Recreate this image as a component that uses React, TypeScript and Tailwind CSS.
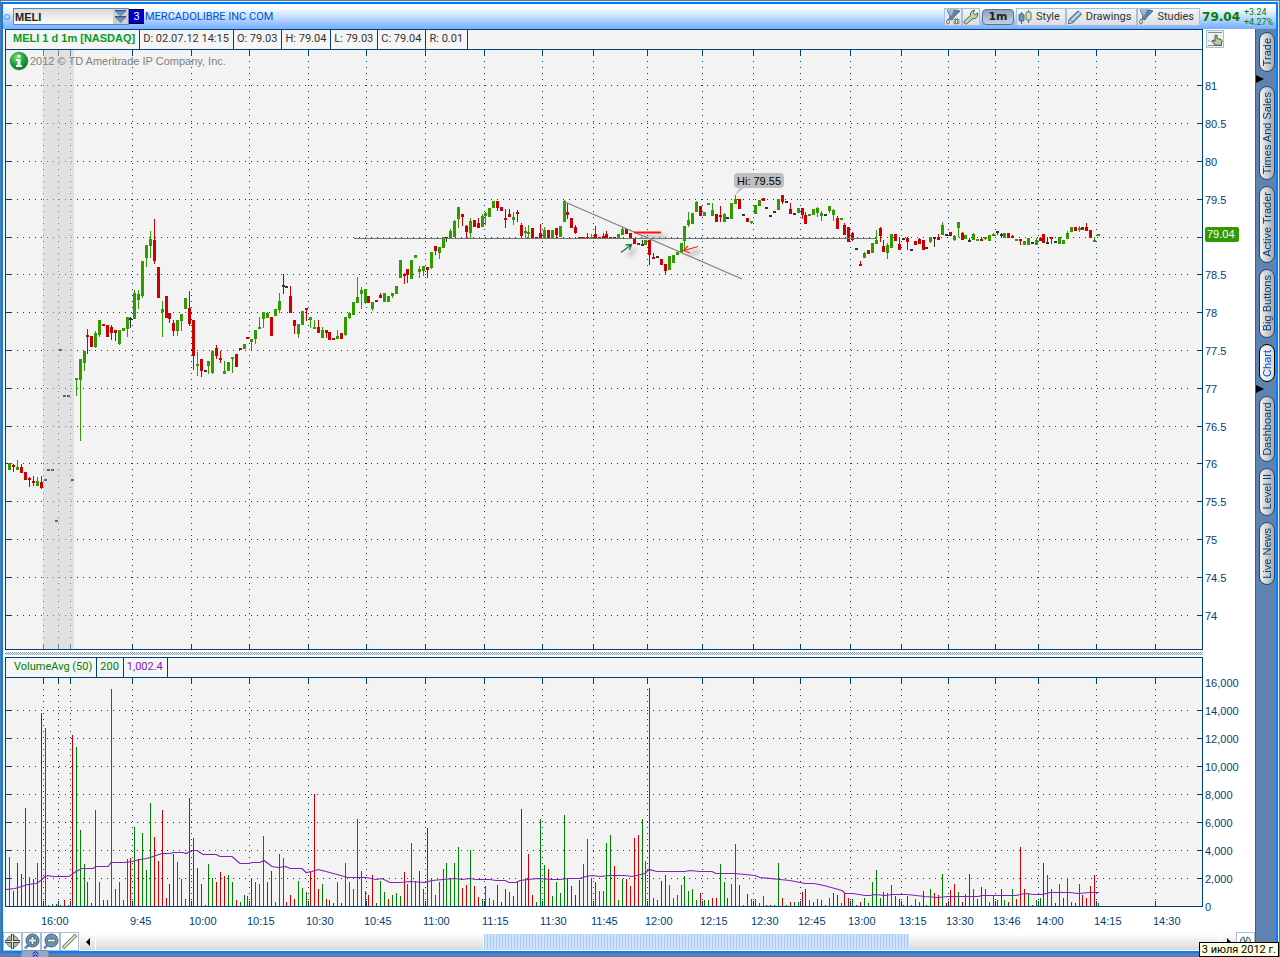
import type { ReactNode } from 'react';

type Tone = 'g' | 'r' | 'k' | 'd';
// x, body top, body bottom, tone, wick top, wick bottom
type Candle = [number, number, number, Tone, number?, number?];
// x, top, tone
type VolumeBar = [number, number, Tone];

const PLOT_LEFT = 5;
const PLOT_RIGHT = 1202;
const VOLUME_BASE = 906;

const candleColors: Record<Tone, string> = {
  g: '#339900',
  r: '#cc0000',
  k: '#333333',
  d: '#666666',
};

const volumeColors: Record<Tone, string> = {
  g: '#008000',
  r: '#cc0000',
  k: '#333333',
  d: '#666666',
};

const timeTicks = [
  { x: 43, label: '16:00' },
  { x: 58, label: '' },
  { x: 70, label: '' },
  { x: 132, label: '9:45' },
  { x: 191, label: '10:00' },
  { x: 249, label: '10:15' },
  { x: 308, label: '10:30' },
  { x: 366, label: '10:45' },
  { x: 425, label: '11:00' },
  { x: 484, label: '11:15' },
  { x: 542, label: '11:30' },
  { x: 593, label: '11:45' },
  { x: 647, label: '12:00' },
  { x: 702, label: '12:15' },
  { x: 753, label: '12:30' },
  { x: 800, label: '12:45' },
  { x: 850, label: '13:00' },
  { x: 901, label: '13:15' },
  { x: 948, label: '13:30' },
  { x: 995, label: '13:46' },
  { x: 1038, label: '14:00' },
  { x: 1096, label: '14:15' },
  { x: 1155, label: '14:30' },
];

const priceTicks = [
  { y: 85, label: '81' },
  { y: 123, label: '80.5' },
  { y: 161, label: '80' },
  { y: 199, label: '79.5' },
  { y: 237, label: '' },
  { y: 274, label: '78.5' },
  { y: 312, label: '78' },
  { y: 350, label: '77.5' },
  { y: 388, label: '77' },
  { y: 426, label: '76.5' },
  { y: 463, label: '76' },
  { y: 501, label: '75.5' },
  { y: 539, label: '75' },
  { y: 577, label: '74.5' },
  { y: 615, label: '74' },
];

const volumeTicks = [
  { y: 710, label: '14,000' },
  { y: 738, label: '12,000' },
  { y: 766, label: '10,000' },
  { y: 794, label: '8,000' },
  { y: 822, label: '6,000' },
  { y: 850, label: '4,000' },
  { y: 878, label: '2,000' },
];

const candles: Candle[] = [
  [9, 463, 470, 'g'], [13, 465, 467, 'r', 464, 472], [17, 467, 470, 'g', 460, 470], [21, 467, 473, 'r', 464, 473],
  [25, 472, 480, 'r'], [29, 478, 480, 'r', 477, 487], [33, 481, 483, 'r', 476, 486], [37, 481, 486, 'g', 477, 486],
  [41, 482, 488, 'r', 476, 489], [45, 479, 481, 'd'], [48, 469, 471, 'd'], [52, 469, 471, 'd'], [56, 520, 522, 'd'],
  [60, 349, 351, 'd'], [64, 395, 397, 'd'], [68, 395, 397, 'd'], [72, 479, 481, 'd'],
  [76, 378, 380, 'g', 378, 396], [80, 359, 380, 'g', 359, 441], [84, 351, 363, 'g', 351, 371], [87, 335, 337, 'r', 329, 354],
  [91, 336, 347, 'r'], [95, 333, 347, 'g', 331, 348], [99, 320, 335, 'g', 320, 337], [103, 324, 326, 'r'],
  [107, 325, 337, 'r'], [111, 327, 333, 'r', 325, 340], [115, 330, 333, 'r', 330, 341], [119, 330, 344, 'g', 330, 345],
  [123, 328, 331, 'g'], [127, 317, 329, 'g', 317, 337], [130, 318, 320, 'k', 317, 328], [134, 293, 319, 'g', 290, 319],
  [138, 294, 300, 'g', 290, 309], [142, 261, 296, 'g', 261, 298], [146, 245, 258, 'g', 245, 267], [150, 239, 246, 'g', 231, 258],
  [154, 240, 261, 'r', 219, 264], [158, 267, 298, 'r'], [162, 309, 312, 'g', 301, 337], [166, 296, 318, 'r'],
  [169, 313, 319, 'r', 313, 323], [173, 323, 331, 'r', 320, 336], [177, 320, 331, 'g', 320, 336], [181, 314, 321, 'g', 314, 331],
  [185, 298, 309, 'g'], [189, 308, 324, 'r', 291, 326], [193, 320, 356, 'r', 320, 370], [197, 364, 366, 'g', 352, 376],
  [201, 359, 371, 'r', 359, 377], [205, 370, 372, 'k'], [208, 361, 366, 'g', 361, 374], [212, 351, 373, 'g', 350, 374],
  [216, 348, 356, 'r', 345, 359], [220, 358, 360, 'r', 351, 363], [224, 371, 374, 'g', 361, 374], [228, 362, 371, 'g'],
  [232, 357, 359, 'g', 357, 373], [236, 354, 367, 'r'], [240, 348, 350, 'r'], [244, 344, 349, 'g'], [247, 337, 339, 'r'],
  [251, 339, 342, 'g', 339, 350], [255, 330, 339, 'g', 330, 344], [259, 327, 329, 'g', 317, 329], [263, 312, 319, 'g', 312, 328],
  [267, 313, 318, 'g', 312, 318], [271, 317, 336, 'r'], [275, 309, 316, 'g'], [279, 301, 310, 'g', 293, 313],
  [283, 285, 287, 'k', 274, 294], [286, 286, 288, 'k'], [290, 296, 313, 'r', 286, 313], [294, 320, 326, 'r', 320, 334],
  [298, 324, 334, 'g', 324, 338], [302, 311, 325, 'g'], [306, 308, 310, 'r', 308, 321], [310, 317, 320, 'g', 317, 328],
  [314, 327, 329, 'g', 320, 329], [318, 327, 333, 'r', 320, 333], [322, 330, 338, 'g', 327, 338], [326, 330, 333, 'r', 330, 338],
  [329, 332, 340, 'r'], [333, 338, 340, 'r'], [337, 336, 339, 'g', 330, 339], [341, 333, 339, 'r'],
  [345, 317, 335, 'g', 317, 336], [349, 313, 318, 'g', 312, 319], [353, 302, 315, 'g'], [357, 297, 303, 'g', 277, 303],
  [361, 290, 294, 'g', 287, 309], [365, 289, 303, 'g', 289, 304], [368, 296, 303, 'r'], [372, 302, 309, 'g', 302, 311],
  [376, 300, 302, 'r'], [380, 295, 298, 'r', 293, 298], [384, 293, 302, 'g'], [388, 296, 302, 'g'],
  [392, 293, 296, 'g', 293, 298], [396, 286, 294, 'g'], [400, 260, 278, 'g'], [404, 274, 276, 'r', 273, 284],
  [407, 269, 275, 'r', 269, 283], [411, 260, 279, 'g'], [415, 255, 258, 'g'], [419, 269, 272, 'g', 266, 278],
  [423, 266, 271, 'g', 266, 276], [427, 267, 270, 'r', 267, 278], [431, 252, 268, 'g', 252, 269], [435, 246, 251, 'r', 246, 255],
  [439, 247, 253, 'g', 247, 259], [443, 237, 248, 'g'], [446, 237, 239, 'k', 237, 242], [450, 231, 239, 'g', 229, 239],
  [454, 221, 237, 'g', 220, 237], [458, 207, 219, 'g', 207, 228], [462, 214, 217, 'r', 214, 226], [466, 226, 232, 'r', 225, 238],
  [470, 221, 233, 'g', 218, 238], [474, 220, 227, 'r'], [478, 223, 228, 'r', 218, 228], [482, 216, 227, 'g', 214, 227],
  [485, 213, 216, 'g', 212, 225], [489, 208, 217, 'g'], [493, 201, 208, 'g'], [497, 201, 208, 'r', 201, 211],
  [501, 207, 211, 'r'], [505, 218, 220, 'r', 209, 228], [509, 214, 217, 'r', 209, 217], [513, 217, 220, 'g', 212, 225],
  [517, 212, 214, 'r', 210, 222], [521, 225, 236, 'r', 223, 238], [525, 231, 233, 'g', 227, 238], [528, 232, 234, 'g', 225, 238],
  [532, 228, 238, 'r'], [536, 237, 239, 'k'], [540, 233, 238, 'r', 224, 238], [544, 230, 238, 'g', 227, 238],
  [548, 230, 238, 'r'], [552, 230, 238, 'g'], [556, 228, 235, 'r', 228, 238], [560, 226, 237, 'g'],
  [564, 201, 222, 'g', 200, 222], [567, 212, 215, 'r', 203, 219], [571, 218, 228, 'r'], [575, 227, 233, 'r', 225, 234],
  [579, 237, 239, 'r'], [583, 237, 239, 'r'], [587, 237, 239, 'r', 233, 239], [591, 237, 239, 'g', 234, 239],
  [595, 234, 238, 'r', 226, 238], [599, 237, 239, 'r'], [603, 236, 239, 'r', 233, 239], [606, 234, 238, 'r', 231, 238],
  [610, 237, 239, 'r'], [614, 237, 239, 'k'], [618, 234, 238, 'g'], [622, 229, 235, 'g', 227, 235],
  [626, 229, 234, 'r'], [630, 233, 238, 'r'], [634, 238, 244, 'r'], [638, 243, 245, 'r'],
  [642, 244, 246, 'k', 240, 246], [645, 240, 245, 'g'], [649, 240, 255, 'r', 240, 265], [653, 257, 259, 'r', 253, 259],
  [657, 256, 258, 'k'], [661, 259, 265, 'r'], [665, 264, 271, 'r', 264, 275], [669, 256, 270, 'g'],
  [673, 255, 263, 'g'], [677, 252, 255, 'g'], [681, 243, 253, 'g'], [684, 226, 241, 'g', 226, 250],
  [688, 220, 225, 'g', 212, 227], [692, 213, 224, 'g'], [696, 202, 212, 'g', 201, 212], [700, 206, 216, 'r'],
  [704, 212, 216, 'g'], [708, 203, 205, 'g'], [712, 210, 216, 'g', 203, 216], [716, 214, 222, 'r'],
  [720, 215, 217, 'r', 206, 222], [724, 214, 222, 'g', 213, 222], [727, 217, 219, 'k'], [731, 203, 219, 'g'],
  [735, 199, 204, 'g', 195, 204], [739, 199, 209, 'r'], [743, 214, 216, 'k'], [747, 218, 222, 'r'],
  [751, 221, 223, 'g', 221, 224], [755, 205, 214, 'g'], [759, 200, 206, 'g'], [763, 198, 201, 'r'],
  [766, 207, 209, 'k'], [770, 215, 217, 'k'], [774, 211, 213, 'k'], [778, 199, 210, 'g'],
  [782, 195, 202, 'r', 195, 204], [786, 201, 203, 'k'], [790, 209, 214, 'r', 203, 214], [794, 213, 215, 'k'],
  [798, 208, 213, 'g'], [802, 208, 215, 'r', 208, 219], [805, 215, 224, 'r', 212, 224], [809, 214, 216, 'g'],
  [813, 209, 215, 'g'], [817, 208, 213, 'g', 207, 217], [821, 213, 216, 'g', 211, 221], [825, 214, 216, 'k'],
  [829, 206, 211, 'g', 206, 213], [833, 210, 215, 'g', 209, 221], [837, 218, 229, 'r', 216, 229], [841, 218, 220, 'g'],
  [844, 225, 235, 'r', 223, 235], [848, 227, 242, 'r'], [852, 233, 240, 'r', 232, 241], [856, 248, 250, 'k'],
  [860, 264, 266, 'r', 261, 266], [864, 253, 258, 'g', 252, 258], [868, 250, 254, 'r'], [872, 243, 253, 'g'],
  [876, 240, 244, 'g', 230, 244], [880, 228, 236, 'r', 227, 242], [883, 246, 252, 'r', 240, 252], [887, 245, 253, 'g', 243, 259],
  [891, 234, 248, 'g'], [895, 234, 241, 'r'], [899, 244, 250, 'r', 237, 250], [903, 238, 240, 'k'],
  [907, 238, 242, 'r', 237, 250], [911, 249, 251, 'k'], [915, 241, 245, 'r'], [919, 239, 244, 'r', 238, 244],
  [923, 240, 250, 'r'], [926, 247, 249, 'k'], [930, 237, 242, 'g', 237, 243], [934, 237, 239, 'k', 237, 247],
  [938, 237, 240, 'r', 234, 240], [942, 225, 235, 'g', 222, 235], [946, 234, 236, 'k'], [950, 232, 236, 'r'],
  [954, 236, 240, 'g', 235, 241], [958, 222, 228, 'g', 222, 237], [962, 233, 240, 'r', 232, 240], [965, 235, 239, 'g'],
  [969, 240, 242, 'k', 238, 242], [973, 234, 240, 'g', 233, 240], [977, 239, 241, 'g'], [981, 239, 241, 'r', 237, 241],
  [985, 237, 239, 'g', 237, 240], [989, 235, 241, 'g'], [993, 234, 236, 'g', 233, 236], [997, 231, 233, 'k', 231, 235],
  [1001, 234, 236, 'k', 233, 238], [1004, 233, 238, 'g'], [1008, 233, 238, 'r'], [1012, 236, 238, 'r', 235, 238],
  [1016, 239, 241, 'g'], [1020, 239, 241, 'r', 239, 245], [1024, 241, 245, 'g'], [1028, 238, 245, 'g'],
  [1032, 242, 244, 'k'], [1036, 240, 245, 'g', 238, 245], [1040, 238, 241, 'r', 237, 241], [1043, 234, 243, 'r'],
  [1047, 242, 244, 'k', 237, 244], [1051, 237, 239, 'r', 237, 244], [1055, 241, 243, 'k'], [1059, 237, 244, 'g'],
  [1063, 240, 244, 'g'], [1067, 233, 239, 'g', 231, 239], [1071, 227, 232, 'g'], [1075, 227, 231, 'r'],
  [1079, 228, 230, 'g', 226, 232], [1082, 227, 230, 'r'], [1086, 227, 231, 'r', 223, 231], [1090, 230, 238, 'r'],
  [1094, 240, 242, 'g', 237, 242], [1098, 234, 236, 'g'],
];

const volumeBars: VolumeBar[] = [
  [9, 857, 'g'], [13, 891, 'r'], [17, 863, 'r'], [21, 874, 'r'], [25, 808, 'r'], [29, 877, 'r'], [33, 879, 'r'], [37, 863, 'g'],
  [41, 713, 'r'], [45, 728, 'g'], [48, 905, 'g'], [52, 904, 'g'], [56, 904, 'r'], [60, 905, 'g'], [64, 900, 'r'], [68, 905, 'g'],
  [72, 735, 'r'], [76, 747, 'g'], [80, 830, 'g'], [84, 864, 'g'], [87, 882, 'g'], [91, 903, 'r'], [95, 810, 'g'], [99, 882, 'g'],
  [103, 900, 'r'], [107, 900, 'r'], [111, 689, 'g'], [115, 889, 'g'], [119, 882, 'g'], [123, 900, 'g'], [127, 859, 'g'],
  [130, 858, 'r'], [134, 827, 'g'], [138, 859, 'r'], [142, 833, 'g'], [146, 870, 'g'], [150, 803, 'g'], [154, 837, 'r'],
  [158, 861, 'r'], [162, 810, 'r'], [166, 898, 'r'], [169, 884, 'r'], [173, 854, 'r'], [177, 862, 'g'], [181, 879, 'g'],
  [185, 899, 'g'], [189, 798, 'r'], [193, 838, 'r'], [197, 868, 'r'], [201, 884, 'r'], [205, 905, 'r'], [208, 864, 'g'],
  [212, 878, 'g'], [216, 882, 'r'], [220, 872, 'r'], [224, 876, 'r'], [228, 875, 'g'], [232, 882, 'g'], [236, 900, 'r'],
  [240, 902, 'g'], [244, 895, 'g'], [247, 896, 'g'], [251, 878, 'r'], [255, 882, 'g'], [259, 884, 'g'], [263, 836, 'g'],
  [267, 882, 'r'], [271, 871, 'r'], [275, 902, 'g'], [279, 854, 'g'], [283, 858, 'g'], [286, 902, 'r'], [290, 895, 'r'],
  [294, 899, 'r'], [298, 881, 'g'], [302, 888, 'g'], [306, 892, 'g'], [310, 871, 'r'], [314, 794, 'r'], [318, 889, 'r'],
  [322, 884, 'g'], [326, 899, 'r'], [329, 900, 'r'], [333, 903, 'g'], [337, 882, 'g'], [341, 903, 'r'], [345, 863, 'g'],
  [349, 882, 'g'], [353, 889, 'g'], [357, 819, 'g'], [361, 871, 'g'], [365, 891, 'g'], [368, 895, 'r'], [372, 875, 'r'],
  [376, 903, 'g'], [380, 881, 'g'], [384, 892, 'g'], [388, 899, 'r'], [392, 895, 'g'], [396, 893, 'g'], [400, 896, 'g'],
  [404, 872, 'r'], [407, 884, 'g'], [411, 843, 'g'], [415, 881, 'g'], [419, 871, 'r'], [423, 889, 'g'], [427, 828, 'r'],
  [431, 878, 'g'], [435, 895, 'g'], [439, 882, 'g'], [443, 869, 'g'], [446, 863, 'g'], [450, 878, 'g'], [454, 863, 'g'],
  [458, 847, 'g'], [462, 888, 'r'], [466, 885, 'r'], [470, 850, 'g'], [474, 886, 'r'], [478, 897, 'r'], [482, 899, 'g'],
  [485, 886, 'g'], [489, 898, 'g'], [493, 900, 'g'], [497, 885, 'r'], [501, 902, 'r'], [505, 889, 'r'], [509, 892, 'g'],
  [513, 896, 'r'], [517, 881, 'g'], [521, 809, 'r'], [525, 878, 'g'], [528, 854, 'r'], [532, 895, 'r'], [536, 902, 'g'],
  [540, 819, 'g'], [544, 865, 'g'], [548, 869, 'r'], [552, 896, 'g'], [556, 882, 'g'], [560, 893, 'g'], [564, 815, 'g'],
  [567, 879, 'r'], [571, 886, 'r'], [575, 895, 'r'], [579, 880, 'r'], [583, 864, 'g'], [587, 839, 'g'], [591, 878, 'g'],
  [595, 882, 'r'], [599, 891, 'g'], [603, 891, 'g'], [606, 843, 'g'], [610, 835, 'g'], [614, 866, 'r'], [618, 900, 'g'],
  [622, 879, 'g'], [626, 879, 'r'], [630, 886, 'r'], [634, 838, 'r'], [638, 835, 'r'], [642, 819, 'g'], [645, 861, 'g'],
  [649, 688, 'r'], [653, 898, 'r'], [657, 900, 'g'], [661, 881, 'r'], [665, 875, 'r'], [669, 885, 'g'], [673, 898, 'g'],
  [677, 895, 'g'], [681, 885, 'g'], [684, 876, 'g'], [688, 891, 'g'], [692, 889, 'g'], [696, 900, 'g'], [700, 893, 'r'],
  [704, 900, 'g'], [708, 900, 'g'], [712, 898, 'r'], [716, 898, 'r'], [720, 864, 'g'], [724, 882, 'g'], [727, 898, 'r'],
  [731, 884, 'g'], [735, 844, 'g'], [739, 885, 'r'], [743, 905, 'r'], [747, 894, 'r'], [751, 899, 'g'], [755, 899, 'g'],
  [759, 903, 'g'], [763, 896, 'g'], [766, 905, 'r'], [770, 905, 'r'], [774, 905, 'g'], [778, 863, 'g'], [782, 898, 'r'],
  [786, 905, 'g'], [790, 902, 'r'], [794, 902, 'g'], [798, 902, 'g'], [802, 892, 'r'], [805, 889, 'r'], [809, 900, 'g'],
  [813, 902, 'g'], [817, 899, 'g'], [821, 900, 'r'], [825, 905, 'r'], [829, 898, 'g'], [833, 893, 'r'], [837, 895, 'r'],
  [841, 903, 'g'], [844, 893, 'r'], [848, 898, 'r'], [852, 899, 'g'], [856, 905, 'r'], [860, 902, 'r'], [864, 898, 'g'],
  [868, 903, 'g'], [872, 882, 'g'], [876, 870, 'g'], [880, 898, 'g'], [883, 892, 'r'], [887, 893, 'g'], [891, 885, 'g'],
  [895, 896, 'r'], [899, 899, 'r'], [903, 905, 'g'], [907, 896, 'r'], [911, 905, 'r'], [915, 899, 'g'], [919, 902, 'g'],
  [923, 891, 'r'], [926, 905, 'g'], [930, 889, 'g'], [934, 893, 'r'], [938, 895, 'r'], [942, 874, 'g'], [946, 903, 'r'],
  [950, 890, 'r'], [954, 884, 'r'], [958, 892, 'g'], [962, 902, 'r'], [965, 894, 'g'], [969, 874, 'r'], [973, 889, 'g'],
  [977, 899, 'r'], [981, 887, 'r'], [985, 889, 'g'], [989, 902, 'g'], [993, 896, 'g'], [997, 900, 'g'], [1001, 889, 'r'],
  [1004, 900, 'g'], [1008, 902, 'r'], [1012, 889, 'g'], [1016, 899, 'r'], [1020, 847, 'r'], [1024, 889, 'r'], [1028, 893, 'g'],
  [1032, 905, 'r'], [1036, 900, 'g'], [1040, 898, 'g'], [1043, 863, 'r'], [1047, 875, 'g'], [1051, 889, 'g'], [1055, 903, 'r'],
  [1059, 884, 'g'], [1063, 898, 'r'], [1067, 878, 'g'], [1071, 902, 'g'], [1075, 903, 'r'], [1079, 884, 'g'], [1082, 895, 'r'],
  [1086, 898, 'r'], [1090, 886, 'r'], [1094, 875, 'r'], [1098, 903, 'g'],
];

const volumeAverage =
  '6,889 15,888 28,884 36,883 41,880 45,876 48,875 53,876 69,876 76,871 82,868 93,868 96,866 108,866 111,862 125,862 132,861 ' +
  '140,859 147,858 153,856 162,853 170,853 174,852 183,852 186,853 192,850 197,850 203,854 216,854 220,856 232,856 240,863 ' +
  '249,863 252,862 260,862 264,860 272,866 278,867 286,866 290,868 302,868 306,872 312,871 318,869 326,871 348,877 366,877 ' +
  '376,879 382,878 390,882 400,882 410,881 425,882 432,880 443,879 455,878 462,879 470,878 476,879 490,879 496,880 505,880 ' +
  '509,882 516,882 520,880 528,879 538,878 552,879 560,879 568,878 580,878 586,876 592,875 600,876 610,875 625,875 632,876 ' +
  '645,873 649,869 657,871 685,871 690,870 700,871 712,871 716,873 735,873 755,875 760,877 780,879 790,880 800,882 805,883 ' +
  '814,883 824,885 842,890 845,893 853,893 865,895 870,895 875,894 885,895 892,894 907,894 925,896 938,897 948,896 978,896 ' +
  '982,895 1016,895 1025,893 1034,894 1042,894 1050,892 1070,892 1078,893 1090,892 1099,892';

interface GridProps {
  top: number;
  bottom: number;
  firstDot: number;
  rows: { y: number; label: string }[];
}

function Grid({ top, bottom, firstDot, rows }: GridProps) {
  return (
    <g stroke="#003f77" strokeWidth={1} shapeRendering="crispEdges">
      {timeTicks.map(({ x }) => (
        <g key={x}>
          <line x1={x + 0.5} x2={x + 0.5} y1={firstDot} y2={bottom - 6} strokeDasharray="1 5" />
          <line x1={x + 0.5} x2={x + 0.5} y1={top} y2={top + 6} />
          <line x1={x + 0.5} x2={x + 0.5} y1={bottom - 5} y2={bottom} />
        </g>
      ))}
      {rows.map(({ y }) => (
        <g key={y}>
          <line x1={17} x2={1188} y1={y + 0.5} y2={y + 0.5} strokeDasharray="1 5" />
          <line x1={6} x2={12} y1={y + 0.5} y2={y + 0.5} />
          <line x1={1197} x2={PLOT_RIGHT} y1={y + 0.5} y2={y + 0.5} />
        </g>
      ))}
      <line x1={PLOT_LEFT + 0.5} x2={PLOT_LEFT + 0.5} y1={top} y2={bottom} />
      <line x1={PLOT_RIGHT + 0.5} x2={PLOT_RIGHT + 0.5} y1={top} y2={bottom} />
      <line x1={PLOT_LEFT} x2={PLOT_RIGHT + 1} y1={bottom + 0.5} y2={bottom + 0.5} />
    </g>
  );
}

function PriceChart() {
  return (
    <svg
      viewBox="5 50 1250 600"
      className="block h-auto w-full font-['Liberation_Sans',sans-serif] text-[11px]"
      role="img"
      aria-label="MELI price chart"
    >
      <defs>
        <filter id="soft" x="-50%" y="-100%" width="200%" height="300%">
          <feGaussianBlur stdDeviation="2" />
        </filter>
        <radialGradient id="info" cx="40%" cy="30%" r="70%">
          <stop offset="0" stopColor="#7be07b" />
          <stop offset="0.6" stopColor="#18a03c" />
          <stop offset="1" stopColor="#0a7a2c" />
        </radialGradient>
      </defs>
      <rect x={5} y={50} width={1198} height={600} fill="#f3f3f3" />
      <Grid top={50} bottom={649} firstDot={61} rows={priceTicks} />
      {/* after-hours session */}
      <rect x={43} y={50} width={31} height={599} fill="#d0d0d0" fillOpacity={0.5} />

      <g shapeRendering="crispEdges">
        {candles.map(([x, top, bottom, tone, high, low]) => (
          <g key={x} fill={candleColors[tone]}>
            {high !== undefined && low !== undefined && (
              <rect x={x} y={high} width={1} height={low - high} />
            )}
            <rect x={x - 1} y={top} width={3} height={bottom - top} />
          </g>
        ))}
      </g>

      {/* drawings */}
      <line x1={354} x2={876} y1={238.5} y2={238.5} stroke="#737373" />
      <line x1={565} x2={742} y1={202} y2={279} stroke="#808080" strokeWidth={1.2} />
      <g stroke="#909090" strokeWidth={4} opacity={0.5} filter="url(#soft)">
        <line x1={640} x2={666} y1={236} y2={237} />
        <line x1={628} x2={636} y1={256} y2={249} />
        <line x1={688} x2={700} y1={255} y2={251} />
      </g>
      <line x1={634} x2={661} y1={232.5} y2={232.5} stroke="#ff1010" strokeWidth={2} />
      <path d="M621 252.500L631 245M625.500 245L631.500 244.500L629.500 250" fill="none" stroke="#18803a" strokeWidth={1.4} />
      <path d="M698 246.500L684 250.500M688 246L683.500 250.500L690 253" fill="none" stroke="#ff2020" strokeWidth={1.2} />
      <path d="M739 188L735 195L744 188Z" fill="#c8c8c8" />
      <rect x={734} y={173} width={50} height={15} rx={4} fill="#bfbfbf" />
      <text x={737} y={185} fill="#000000">Hi: 79.55</text>

      <circle cx={19} cy={61} r={9} fill="url(#info)" stroke="#2a7a3a" strokeWidth={0.5} />
      <path d="M17.500 55h3v2.500h-3zM16 59h4.500v6h1.500v2h-6v-2h1.500v-4h-1.500z" fill="#ffffff" />
      <text x={30} y={65} fill="#808080">2012 © TD Ameritrade IP Company, Inc.</text>

      {priceTicks.map(({ y, label }) => (
        <text key={y} x={1205} y={y + 5} fill="#003f77">{label}</text>
      ))}
      <rect x={1205} y={227} width={34} height={15} rx={2} fill="#339900" />
      <text x={1207} y={238} fill="#ffffff">79.04</text>
    </svg>
  );
}

function VolumeChart() {
  return (
    <svg
      viewBox="5 678 1250 254"
      className="block h-auto w-full font-['Liberation_Sans',sans-serif] text-[11px]"
      role="img"
      aria-label="MELI volume chart"
    >
      <rect x={5} y={678} width={1198} height={229} fill="#f3f3f3" />
      <Grid top={678} bottom={VOLUME_BASE} firstDot={689} rows={volumeTicks} />
      <g shapeRendering="crispEdges">
        {volumeBars.map(([x, top, tone]) => (
          <rect key={x} x={x} y={top} width={1} height={VOLUME_BASE - top} fill={volumeColors[tone]} />
        ))}
      </g>
      <polyline points={volumeAverage} transform="translate(0 0.5)" fill="none" stroke="#8422b4" strokeWidth={1.2} />
      <g fill="#003f77">
        <text x={1205} y={687}>16,000</text>
        {volumeTicks.map(({ y, label }) => (
          <text key={y} x={1205} y={y + 5}>{label}</text>
        ))}
        <text x={1205} y={911}>0</text>
        {timeTicks.map(({ x, label }) => (
          <text key={x} x={x - 2} y={925}>{label}</text>
        ))}
      </g>
    </svg>
  );
}

function FunnelIcon({ gear = false }: { gear?: boolean }) {
  return (
    <svg viewBox="0 0 16 16" className="size-4">
      <path d="M2 1l10 0 3 1-6 6-2 3-3-1 1-3z" fill="#5d86ad" stroke="#3e5f80" strokeWidth="0.8" />
      <path d="M2 1l7 0-3 6z" fill="#9cbdd8" />
      <path d="M3 10q-3 4 0 5q3-1 0-5z" fill="#eef4dc" stroke="#4a6040" strokeWidth="0.9" />
      {gear && <path d="M9 10.500h5v4h-5zM10.500 9v6.500M12.500 9v6.500" fill="#dde6cc" stroke="#6a7a66" strokeWidth="0.8" />}
    </svg>
  );
}

function WrenchIcon() {
  return (
    <svg viewBox="0 0 16 16" className="size-4">
      <path
        d="M1.500 14.500q-1-1.500 0-2.700l6-5.200q-.8-3.500 2.500-5.200l1.700-.3-1.500 2.800 2 1.800 2.600-1.800q.5 4.500-2.600 5.700l-2.600.1-5.700 5q-1.300.8-2.400-.2z"
        fill="#c2d2a8"
        stroke="#4d6254"
      />
    </svg>
  );
}

function CandlesIcon() {
  return (
    <svg viewBox="0 0 16 16" className="size-4">
      <path d="M4.500 3v12M11.500 1v13" stroke="#4c6472" />
      <rect x="2" y="5" width="5" height="7" rx="1" fill="#6b94b8" stroke="#4a6c8c" />
      <rect x="9" y="3" width="5" height="8" rx="1" fill="#d3e3b4" stroke="#5e7d58" />
    </svg>
  );
}

function PencilIcon() {
  return (
    <svg viewBox="0 0 16 16" className="size-4">
      <path d="M1.500 14.500l1-4.500 8.500-8 3.500 3-8.500 8.500z" fill="#7fa5c8" stroke="#3e5f80" />
      <path d="M4.500 11.500l8-8" stroke="#d8e8f5" strokeWidth="1.500" />
      <path d="M1.500 14.500l1-4.500 3.500 3.500z" fill="#eef0d8" stroke="#3e5f80" strokeWidth="0.7" />
    </svg>
  );
}

function HandIcon() {
  return (
    <svg viewBox="0 0 16 16" className="size-4">
      <path d="M1 1.500h14M1 14.500h14" stroke="#888888" />
      <path d="M1 9l3 2 4-3 3-4" fill="none" stroke="#8fb5dc" strokeDasharray="2 1" />
      <path d="M8 14l-3-4 1-1 2 1.500v-6q1-1 2 0v3l4 1q1 .5 1 2l-1 4z" fill="#b9c8a2" stroke="#47563f" />
    </svg>
  );
}

function ToolbarButton({ icon, label, text }: { icon: ReactNode; label: string; text?: string }) {
  return (
    <button
      type="button"
      aria-label={label}
      className="flex h-[18px] items-center gap-[3px] border border-[#a9bdd9] bg-linear-to-b from-[#f4f4f6] to-[#dcdfe6] text-[#333333]"
    >
      {icon}
      {text && <span className="pr-[5px]">{text}</span>}
    </button>
  );
}

function Header() {
  return (
    <header className="flex h-[25px] items-center bg-linear-to-b from-white from-15% to-[#75adff]">
      <span className="ml-px size-[6px] rounded-full border border-[#5b8fd8]" />
      <div className="ml-[3px] flex h-[17px] w-[116px] border border-[#5a86c0] bg-linear-to-b from-[#d9d9d9] to-white">
        <input
          aria-label="Symbol"
          defaultValue="MELI"
          className="min-w-0 flex-1 px-px font-['Liberation_Sans',sans-serif] text-[11px] font-bold text-[#222222] outline-none"
        />
        <button type="button" aria-label="Choose symbol" className="w-[15px] bg-[#cfcfcf]">
          <svg viewBox="0 0 15 15" className="size-[15px]">
            <path d="M2 1.500h11M2 7.500h11" stroke="#2f4f78" />
            <path d="M2 2h11l-5.500 5zM2 8h11l-5.500 5.500z" fill="#6b93c0" stroke="#3c618f" strokeWidth="0.6" />
          </svg>
        </button>
      </div>
      <button type="button" className="flex h-[15px] w-[15px] items-center justify-center border border-black bg-[#0000cc] text-white">
        3
      </button>
      <h1 className="ml-px text-[#0050d8]">MERCADOLIBRE INC COM</h1>

      <div className="ml-auto flex items-center gap-[2px]">
        <div className="flex">
          <ToolbarButton icon={<FunnelIcon gear />} label="Edit studies" />
          <ToolbarButton icon={<WrenchIcon />} label="Chart settings" />
        </div>
        <button
          type="button"
          className="h-4 w-[32px] rounded border border-[#5f7388] bg-linear-to-b from-[#8ea3b8] to-[#c3d2e0] font-['DejaVu_Sans',sans-serif] text-[11px] leading-[13px] font-bold text-[#222222]"
        >
          1m
        </button>
        <div className="flex">
          <ToolbarButton icon={<CandlesIcon />} label="Style" text="Style" />
          <ToolbarButton icon={<PencilIcon />} label="Drawings" text="Drawings" />
          <ToolbarButton icon={<FunnelIcon />} label="Studies" text="Studies" />
        </div>
        <span className="font-['DejaVu_Sans',sans-serif] text-[12px] font-bold text-[#008000]">79.04</span>
        <div className="ml-[2px] w-8 text-[9px] leading-[10px] text-[#008000]">
          <div>+3.24</div>
          <div>+4.27%</div>
        </div>
      </div>
    </header>
  );
}

const quoteCells = ['D: 02.07.12 14:15', 'O: 79.03', 'H: 79.04', 'L: 79.03', 'C: 79.04', 'R: 0.01'];

function QuoteBar() {
  return (
    <div className="flex h-[21px]">
      <div className="flex flex-1 border border-[#003f77] bg-[#f5f5f5] leading-[17px] text-[#333333]">
        <strong className="border-r border-[#003f77] pr-1 pl-[7px] font-['Liberation_Sans',sans-serif] text-[#0a9a1e]">
          MELI 1 d 1m [NASDAQ]
        </strong>
        {quoteCells.map((cell) => (
          <span key={cell} className="border-r border-[#003f77] pr-1 pl-[3px]">
            {cell}
          </span>
        ))}
      </div>
      <div className="w-[52px] pt-px pl-[3px]">
        <button type="button" aria-label="Pan chart" className="block border border-[#a9bdd9] bg-[#f0f0f0]">
          <HandIcon />
        </button>
      </div>
    </div>
  );
}

function VolumeBarHeader() {
  return (
    <div className="flex h-[21px]">
      <div className="flex flex-1 border border-[#003f77] bg-[#f5f5f5] leading-[17px]">
        <span className="border-r border-[#003f77] pr-1 pl-2 text-[#008000]">VolumeAvg (50)</span>
        <span className="border-r border-[#003f77] pr-1 pl-[3px] text-[#008000]">200</span>
        <span className="border-r border-[#003f77] pr-1 pl-[3px] text-[#8422b4]">1,002.4</span>
      </div>
      <div className="w-[52px]" />
    </div>
  );
}

function SideTab({ label, active = false }: { label: string; active?: boolean }) {
  return (
    <button
      type="button"
      className={
        active
          ? 'ml-[3px] w-4 rounded-lg border border-black bg-linear-to-r from-white to-[#d5d5d5] py-[5px] text-[#0050d8]'
          : 'ml-[3px] w-4 rounded-lg border border-[#1b4a80] bg-linear-to-r from-[#f5f5f5] to-[#a9a9a9] py-[5px] text-[#003f77]'
      }
    >
      <span className="block rotate-180 text-[11px] leading-[14px] [writing-mode:vertical-rl]">{label}</span>
    </button>
  );
}

function SideArrow() {
  return (
    <svg viewBox="0 0 8 8" className="-my-[3px] size-2">
      <path d="M0 0l8 4-8 4z" fill="#000000" />
    </svg>
  );
}

function Sidebar() {
  return (
    <nav className="flex w-[21px] flex-col items-start gap-[6px] border-l border-[#45607f] bg-[#5f82ae] pt-[3px] font-['Liberation_Sans',sans-serif]">
      <SideTab label="Trade" />
      <SideArrow />
      <SideTab label="Times And Sales" />
      <SideTab label="Active Trader" />
      <SideTab label="Big Buttons" />
      <SideTab label="Chart" active />
      <SideArrow />
      <SideTab label="Dashboard" />
      <SideTab label="Level II" />
      <SideTab label="Live News" />
    </nav>
  );
}

function ScrollTool({ label, children }: { label: string; children: ReactNode }) {
  return (
    <button type="button" aria-label={label} className="size-[19px] border border-[#a9bdd9] bg-white">
      <svg viewBox="0 0 17 17" className="size-[17px]">
        {children}
      </svg>
    </button>
  );
}

function ScrollRow() {
  return (
    <div className="flex h-[19px] items-center">
      <ScrollTool label="Crosshair">
        <circle cx="8.500" cy="8.500" r="6" fill="#aebfae" stroke="#5d7280" />
        <path d="M8.500 1v15M1 8.500h15" stroke="#3c4c4c" strokeWidth="3" />
        <path d="M8.500 1.500v14M1.500 8.500h14" stroke="#e8efd4" />
      </ScrollTool>
      <ScrollTool label="Zoom in">
        <path d="M2 15.500l4-4" stroke="#6b93b8" strokeWidth="3" />
        <circle cx="9.500" cy="7.500" r="6.500" fill="#6b93b8" stroke="#486787" />
        <path d="M9.500 3.500v8M5.500 7.500h8" stroke="#3c5466" strokeWidth="3.500" />
        <path d="M9.500 4v7M6 7.500h7" stroke="#eff4dc" strokeWidth="2" />
      </ScrollTool>
      <ScrollTool label="Zoom out">
        <path d="M2 15.500l4-4" stroke="#6b93b8" strokeWidth="3" />
        <circle cx="9.500" cy="7.500" r="6.500" fill="#6b93b8" stroke="#486787" />
        <path d="M5.500 7.500h8" stroke="#3c5466" strokeWidth="3.500" />
        <path d="M6 7.500h7" stroke="#eff4dc" strokeWidth="2" />
      </ScrollTool>
      <ScrollTool label="Draw line">
        <path d="M2 15l13-13" stroke="#5b6b55" strokeWidth="3.500" />
        <path d="M2.500 14.500l12-12" stroke="#e0e8cc" strokeWidth="1.800" />
      </ScrollTool>
      <button
        type="button"
        aria-label="Scroll left"
        className="ml-px flex h-4 w-[15px] items-center justify-center bg-linear-to-b from-white to-[#d8d8d8]"
      >
        <svg viewBox="0 0 4 8" className="h-2 w-1">
          <path d="M4 0v8l-4-4z" fill="#000000" />
        </svg>
      </button>
      <div
        role="scrollbar"
        aria-label="Chart range"
        aria-controls="chart"
        aria-valuenow={35}
        className="ml-px h-4 flex-1 bg-linear-to-b from-white to-[#d8d8d8]"
      >
        <div className="ml-[34.4%] h-[15px] w-[37.9%] border-l border-white bg-[repeating-linear-gradient(90deg,#a9c9f5_0_1px,#d0e2fc_1px_3px)]" />
      </div>
      <button
        type="button"
        aria-label="Scroll right"
        className="ml-px flex h-4 w-[15px] items-center justify-center bg-linear-to-b from-white to-[#d8d8d8]"
      >
        <svg viewBox="0 0 4 8" className="h-2 w-1">
          <path d="M0 0v8l4-4z" fill="#000000" />
        </svg>
      </button>
      <ScrollTool label="Find">
        <path d="M3 12q0-8 4-8l1 8zM14 12q0-8-4-8l-1 8z" fill="#d7e4c4" stroke="#4d5f68" />
        <path d="M7 7h3v4h-3z" fill="#5e8fc4" />
      </ScrollTool>
    </div>
  );
}

export default function App() {
  return (
    <div className="relative border-x border-t border-[#5b7ba8] bg-[#5b80b0] pb-1 font-['Roboto',sans-serif] text-[11px] leading-[14px]">
      <div className="bg-[#e4ecf8] pt-px pr-px">
        <div className="border-2 border-[#0080ff] bg-white">
          <Header />
          <div className="flex">
            <main id="chart" className="min-w-0 flex-1">
              <div className="pl-[2px]">
                <QuoteBar />
                <PriceChart />
                <div className="py-[2px] pr-[52px]">
                  <div className="h-[3px] bg-[repeating-conic-gradient(#7d93b0_0_25%,#ffffff_0_50%)] bg-size-[2px_2px]" />
                </div>
                <VolumeBarHeader />
                <VolumeChart />
              </div>
              <ScrollRow />
            </main>
            <Sidebar />
          </div>
        </div>
      </div>
      <button
        type="button"
        aria-label="Expand panel"
        className="absolute bottom-0 left-5 flex h-[7px] w-7 items-end justify-center rounded-t border border-b-0 border-[#7890b0] bg-[#93a9c8]"
      >
        <svg viewBox="0 0 7 6" className="h-[6px] w-[7px]">
          <path d="M0.500 3l3-2.500 3 2.500M0.500 6l3-2.500 3 2.500" fill="none" stroke="#0000ee" />
        </svg>
      </button>
      <div
        role="tooltip"
        className="absolute right-0 bottom-0 h-[15px] border border-black bg-[#ffffe1] px-[2px] whitespace-nowrap text-black"
      >
        3 июля 2012 г.
      </div>
    </div>
  );
}
